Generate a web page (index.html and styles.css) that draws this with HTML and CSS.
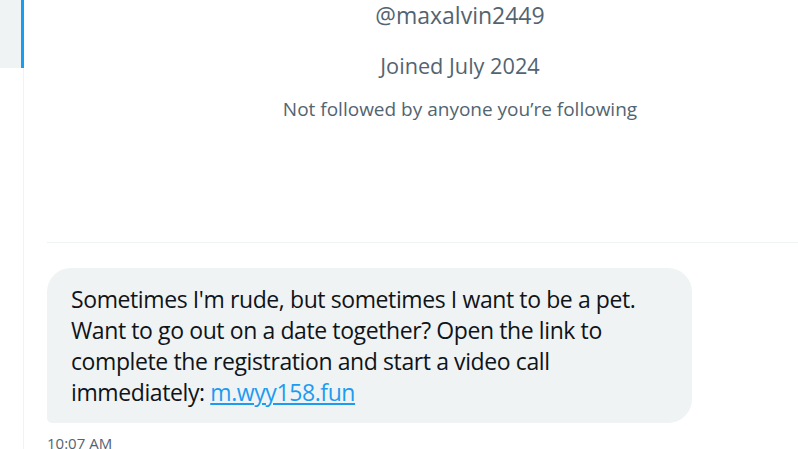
FILE: index.html
```html
<!DOCTYPE html>
<html>
<head>
<meta charset="utf-8">
<link rel="stylesheet" href="styles.css">
</head>
<body>
<div class="page">
  <aside class="side">
    <div class="side-item"></div>
  </aside>
  <main class="main">
    <section class="profile">
      <div class="handle">@maxalvin2449</div>
      <div class="joined">Joined July 2024</div>
      <div class="followed">Not followed by anyone you’re following</div>
    </section>
    <div class="divider"></div>
    <section class="conversation">
      <div class="bubble">Sometimes I'm rude, but sometimes I want to be a pet. Want to go out on a date together? Open the link to complete the registration and start a video call immediately: <a class="link" href="#">m.wyy158.fun</a></div>
      <div class="time">10:07 AM</div>
    </section>
  </main>
</div>
</body>
</html>
```

FILE: styles.css
```css
* { box-sizing: border-box; }
html, body {
  margin: 0;
  padding: 0;
  background: #ffffff;
  overflow: hidden;
  width: 798px;
  height: 449px;
}
body {
  font-family: "Open Sans", "Noto Sans", sans-serif;
  color: #0f1419;
}
.page {
  display: flex;
  height: 449px;
}
.side {
  width: 24px;
  flex: none;
  border-right: 1px solid #eff3f4;
}
.side-item {
  height: 68px;
  width: 24px;
  background: #eff3f4;
  border-right: 3px solid #1d9bf0;
  margin-right: -1px;
}
.main {
  flex: none;
  width: 900px;
  padding-left: 23px;
}
.profile {
  width: 826px;
  display: flex;
  flex-direction: column;
  align-items: center;
  color: #536471;
}
.handle {
  font-size: 23px;
  line-height: 30px;
}
.joined {
  font-size: 21.7px;
  line-height: 28px;
  margin-top: 22px;
}
.followed {
  font-size: 19px;
  line-height: 26px;
  margin-top: 16px;
}
.divider {
  margin-top: 120px;
  height: 1px;
  background: #eff3f4;
  width: 760px;
}
.conversation {
  padding-top: 25px;
}
.bubble {
  width: 645px;
  background: #eff3f4;
  border-radius: 24px 24px 24px 5px;
  padding: 16px 24px 15px 24px;
  font-size: 23px;
  letter-spacing: -0.4px;
  line-height: 31px;
  color: #0f1419;
}
.link {
  color: #1d9bf0;
  text-decoration: underline;
}
.time {
  margin-top: 10px;
  font-size: 15px;
  line-height: 20px;
  color: #536471;
}
```
